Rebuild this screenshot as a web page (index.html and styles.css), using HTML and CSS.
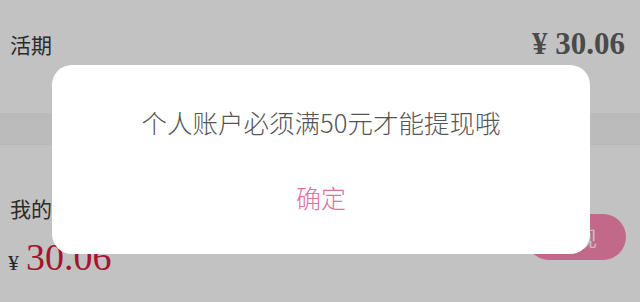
FILE: index.html
```html
<!DOCTYPE html>
<html lang="zh-CN">
<head>
<meta charset="utf-8">
<title>活期</title>
<link rel="stylesheet" href="styles.css">
</head>
<body>
<div class="page">
  <div class="row-top">
    <span class="label">活期</span>
    <span class="amount-top">¥ 30.06</span>
  </div>
  <div class="band"></div>
  <div class="row-balance">
    <div class="balance-col">
      <span class="label">我的余额</span>
      <div class="balance"><span class="yen">¥</span><span class="num">30.06</span></div>
    </div>
    <button class="withdraw">提现</button>
  </div>
</div>
<div class="mask"></div>
<div class="dialog">
  <p class="msg">个人账户必须满50元才能提现哦</p>
  <div class="ok">确定</div>
</div>
</body>
</html>
```

FILE: styles.css
```css
html, body {
  margin: 0;
  padding: 0;
  width: 640px;
  height: 302px;
  overflow: hidden;
  background: #ffffff;
  font-family: "Noto Sans CJK SC", "Noto Sans", sans-serif;
}
.page {
  width: 640px;
}
.row-top {
  display: flex;
  justify-content: space-between;
  align-items: center;
  height: 88px;
  padding: 0 15px 0 10px;
  margin-bottom: 25px;
}
.label {
  font-size: 21px;
  line-height: 26px;
  color: #3a3a3a;
}
.amount-top {
  font-family: "Liberation Serif", serif;
  font-weight: bold;
  font-size: 31px;
  color: #626262;
}
.band {
  height: 32px;
  background: #f6f6f6;
}
.row-balance {
  display: flex;
  justify-content: space-between;
  align-items: center;
  padding: 50px 14px 0 10px;
}
.balance-col {
  display: flex;
  flex-direction: column;
  gap: 14px;
}
.balance {
  display: flex;
  align-items: baseline;
  font-family: "Liberation Serif", serif;
  line-height: 44px;
  margin-left: -2px;
}
.yen {
  font-size: 22px;
  color: #333;
  margin-right: 7px;
}
.num {
  font-size: 38px;
  color: #d81b3c;
}
.withdraw {
  width: 100px;
  height: 46px;
  border: none;
  border-radius: 23px;
  background: #ff8bb6;
  color: #ffffff;
  font-family: "Noto Sans CJK SC", sans-serif;
  font-size: 21px;
  margin-bottom: 6px;
  padding: 0;
}
.mask {
  position: absolute;
  inset: 0;
  background: rgba(0, 0, 0, 0.24);
}
.dialog {
  position: absolute;
  left: 52px;
  top: 65px;
  width: 538px;
  height: 189px;
  background: #ffffff;
  border-radius: 20px;
  display: flex;
  flex-direction: column;
  align-items: center;
  padding-top: 41px;
  box-sizing: border-box;
}
.msg {
  margin: 0;
  font-size: 25.5px;
  font-weight: 300;
  line-height: 32px;
  color: #555555;
}
.ok {
  margin-top: 43px;
  font-size: 25px;
  font-weight: 300;
  line-height: 32px;
  color: #e0709e;
}
```
